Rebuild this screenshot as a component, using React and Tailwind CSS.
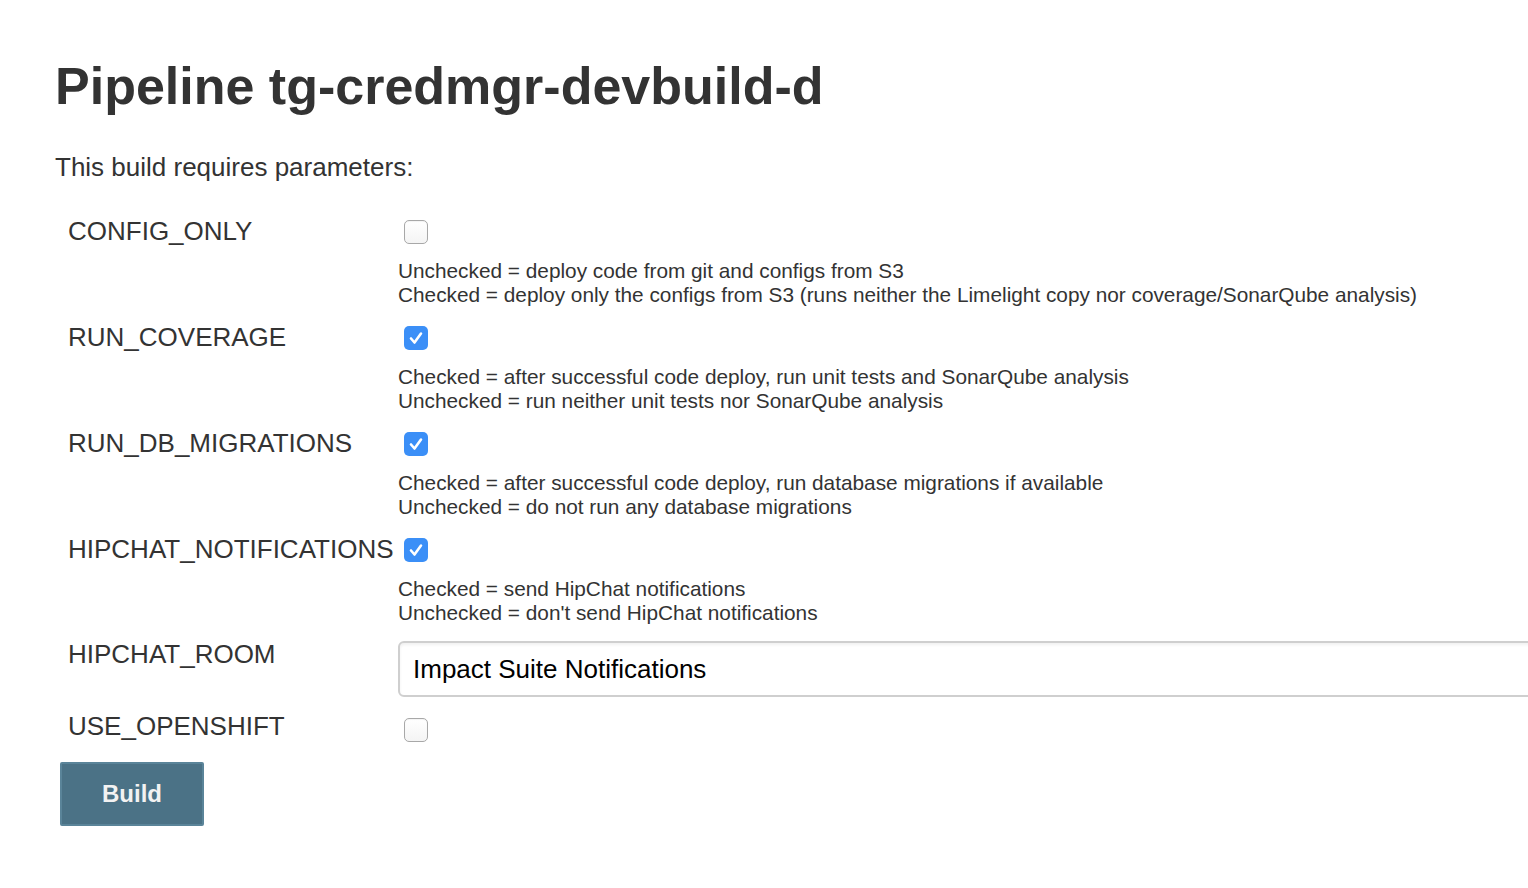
import React from "react";

function Box({ checked }) {
  if (checked) {
    return (
      <div className="w-[24px] h-[24px] rounded-[5px] bg-[#3b8ff7] flex items-center justify-center">
        <svg width="24" height="24" viewBox="0 0 24 24" fill="none">
          <path d="M7 12.5 L10.5 16.5 L17 7.5" stroke="#fff" strokeWidth="2.6" strokeLinecap="round" strokeLinejoin="round" />
        </svg>
      </div>
    );
  }
  return (
    <div className="w-[24px] h-[24px] rounded-[5px] border border-[#a8a8a8] bg-gradient-to-b from-white to-[#f4f4f4] shadow-[inset_0_1px_1px_rgba(0,0,0,0.05)]" />
  );
}

function CheckRow({ name, checked, lines }) {
  return (
    <div className="grid grid-cols-[330px_1fr] pl-[13px] pb-[17px]">
      <div className="text-[26px] leading-[26px] pb-[2px] whitespace-nowrap">{name}</div>
      <div className="flex flex-col">
        <div className="h-[28px] pt-[2px] pl-[6px]">
          <Box checked={checked} />
        </div>
        <div className="mt-[13px] text-[20.8px] leading-[24px] whitespace-nowrap">
          {lines.map((l, i) => (
            <div key={i}>{l}</div>
          ))}
        </div>
      </div>
    </div>
  );
}

export default function App() {
  return (
    <div
      className="w-[1528px] h-[888px] overflow-hidden bg-white text-[#333] pl-[55px] pt-[57px]"
      style={{ fontFamily: '"Liberation Sans", Arial, Helvetica, sans-serif' }}
    >
      <h1 className="text-[52px] leading-[58px] font-bold text-[#333] whitespace-nowrap">
        Pipeline tg-credmgr-devbuild-d
      </h1>
      <p className="mt-[37px] text-[26px] leading-[30px]">This build requires parameters:</p>
      <div className="mt-[36px]">
        <CheckRow
          name="CONFIG_ONLY"
          checked={false}
          lines={[
            "Unchecked = deploy code from git and configs from S3",
            "Checked = deploy only the configs from S3 (runs neither the Limelight copy nor coverage/SonarQube analysis)",
          ]}
        />
        <CheckRow
          name="RUN_COVERAGE"
          checked={true}
          lines={[
            "Checked = after successful code deploy, run unit tests and SonarQube analysis",
            "Unchecked = run neither unit tests nor SonarQube analysis",
          ]}
        />
        <CheckRow
          name="RUN_DB_MIGRATIONS"
          checked={true}
          lines={[
            "Checked = after successful code deploy, run database migrations if available",
            "Unchecked = do not run any database migrations",
          ]}
        />
        <CheckRow
          name="HIPCHAT_NOTIFICATIONS"
          checked={true}
          lines={[
            "Checked = send HipChat notifications",
            "Unchecked = don't send HipChat notifications",
          ]}
        />
        <div className="grid grid-cols-[330px_1fr] pl-[13px] pb-[16px] -mt-[1px]">
          <div className="text-[26px] leading-[26px] whitespace-nowrap">HIPCHAT_ROOM</div>
          <div className="w-[1200px] h-[56px] rounded-[6px] border-2 border-[#cfcfcf] bg-white shadow-[inset_0_2px_3px_rgba(0,0,0,0.06)] flex items-center pl-[13px] text-[26px] text-black">
            Impact Suite Notifications
          </div>
        </div>
        <div className="grid grid-cols-[330px_1fr] pl-[13px]">
          <div className="text-[26px] leading-[26px] pb-[2px] whitespace-nowrap">USE_OPENSHIFT</div>
          <div className="h-[28px] pt-[5px] pl-[6px]">
            <Box checked={false} />
          </div>
        </div>
      </div>
      <button className="mt-[21px] ml-[5px] w-[144px] h-[64px] bg-[#4b7286] border-2 border-[#5a8499] rounded-[2px] text-[24px] font-bold text-[#f2f2f2] flex items-center justify-center">
        Build
      </button>
    </div>
  );
}
